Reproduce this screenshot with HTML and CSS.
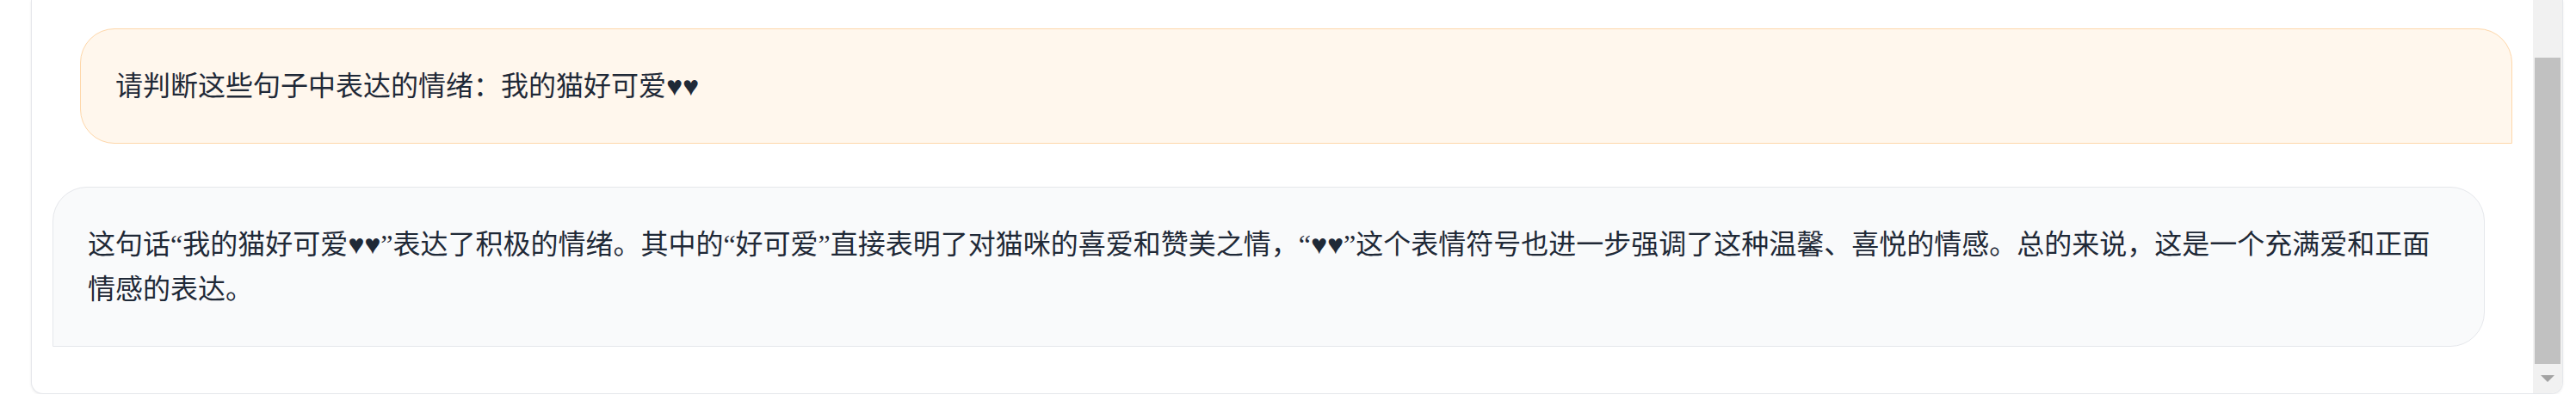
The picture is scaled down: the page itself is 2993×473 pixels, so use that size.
FILE: index.html
```html
<!DOCTYPE html>
<html lang="zh-CN">
<head>
<meta charset="utf-8">
<title>Chat</title>
<link rel="stylesheet" href="styles.css">
</head>
<body>
<div class="panel">
  <div class="messages">
    <div class="msg msg-user">请判断这些句子中表达的情绪：我的猫好可爱♥♥</div>
    <div class="msg msg-bot">这句话“我的猫好可爱♥♥”表达了积极的情绪。其中的“好可爱”直接表明了对猫咪的喜爱和赞美之情，“♥♥”这个表情符号也进一步强调了这种温馨、喜悦的情感。总的来说，这是一个充满爱和正面情感的表达。</div>
  </div>
  <div class="scrollbar">
    <div class="sb-space"></div>
    <div class="sb-thumb"></div>
    <div class="sb-arrow">
      <svg width="16" height="8" viewBox="0 0 16 8"><polygon points="0,0 16,0 8,8" fill="#a3a3a3"/></svg>
    </div>
  </div>
</div>
</body>
</html>
```

FILE: styles.css
```css
* { box-sizing: border-box; }
html, body { margin: 0; background: #ffffff; }
body {
  font-family: "Liberation Serif", "Noto Sans CJK SC", sans-serif;
  color: #1f2937;
  overflow: hidden;
}
.panel {
  display: flex;
  margin: 0 15px 0 36px;
  border: 1px solid #e5e7eb;
  border-top: none;
  border-radius: 0 0 14px 14px;
  overflow: hidden;
  background: #ffffff;
  box-shadow: 0 1px 3px rgba(0, 0, 0, 0.08);
}
.messages {
  flex: 1;
  display: flex;
  flex-direction: column;
  gap: 50px;
  padding: 33px 24px 54px;
}
.msg {
  font-size: 32px;
  line-height: 52px;
  padding: 40px;
  border: 1px solid;
}
.msg-user {
  margin-left: 32px;
  background: #fff7ed;
  border-color: #fed7aa;
  border-radius: 40px 40px 0 40px;
}
.msg-bot {
  margin-right: 32px;
  background: #f9fafb;
  border-color: #e5e7eb;
  border-radius: 40px 40px 40px 0;
}
.scrollbar {
  width: 34px;
  background: #f1f1f1;
  display: flex;
  flex-direction: column;
}
.sb-space { height: 67px; }
.sb-thumb { height: 356px; margin: 0 2px; background: #c1c1c1; }
.sb-arrow {
  flex: 1;
  display: flex;
  align-items: center;
  justify-content: center;
}
```
